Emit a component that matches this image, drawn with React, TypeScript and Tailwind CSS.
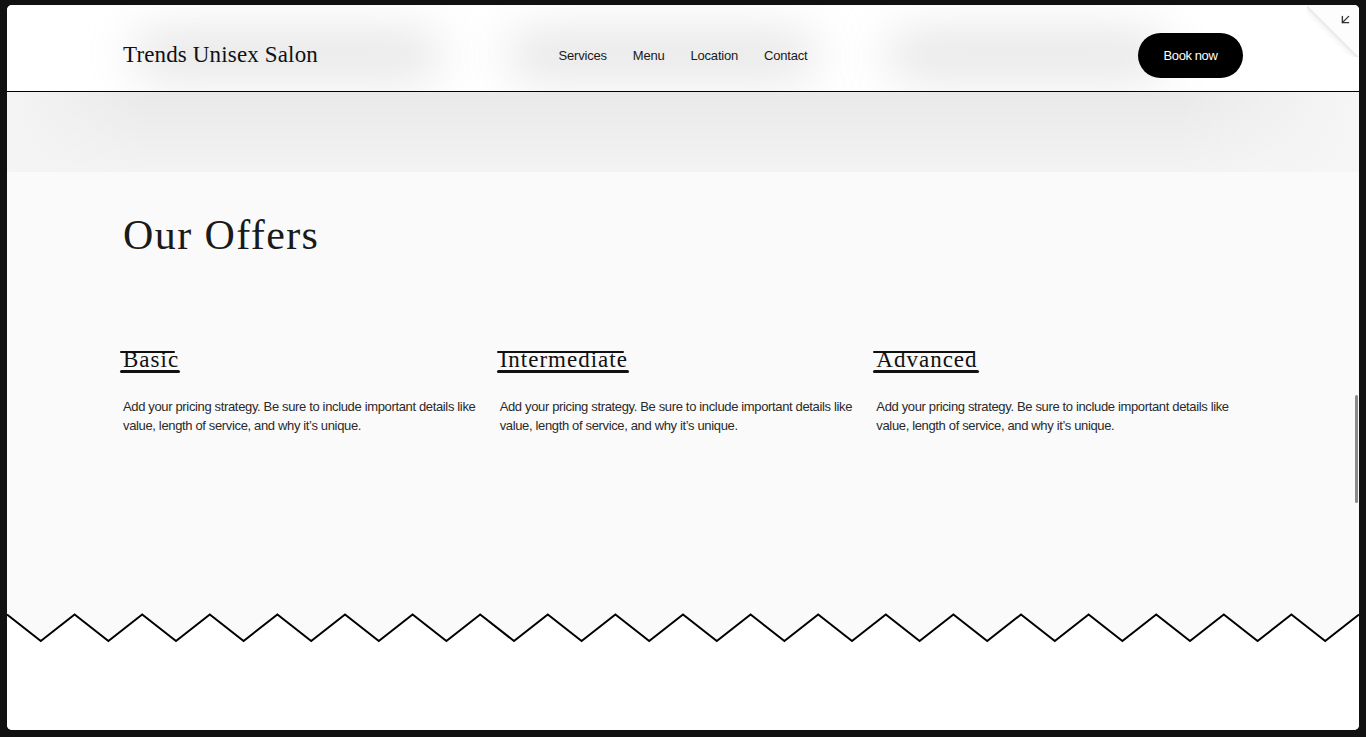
import React from "react";
import { ArrowDownLeft } from "lucide-react";

const serif = "font-['Liberation_Serif',_'Times_New_Roman',_serif]";
const sans = "font-['Liberation_Sans',_Arial,_sans-serif]";

function Zigzag() {
  const pts: string[] = [];
  for (let i = 0; i <= 40; i++) {
    const x = i * 33.8;
    const y = i % 2 === 0 ? 1.5 : 28;
    pts.push(`${x},${y}`);
  }
  const line = pts.join(" ");
  return (
    <svg className="block w-full h-[30px]" viewBox="0 0 1352 30" preserveAspectRatio="none">
      <rect x="0" y="0" width="1352" height="30" fill="#ffffff" />
      <polygon points={`0,0 ${line} 1352,0`} fill="#fafafa" />
      <polyline points={line} fill="none" stroke="#000" strokeWidth="2" />
    </svg>
  );
}

function Offer({ title }: { title: string }) {
  return (
    <div className="flex flex-col">
      <div className="h-[23px]">
        <span className={`relative inline-block ${serif} text-[23px] leading-none tracking-[1px] text-[#111]`}>
          {title}
          <span className="absolute left-[-3px] right-[4px] top-[3px] h-[2px] bg-[#111] rounded-full" />
          <span className="absolute left-[-3px] right-[-1px] top-[22px] h-[2.5px] bg-[#111] rounded-full" />
        </span>
      </div>
      <p className={`mt-[26px] ${sans} text-[13px] leading-[19px] tracking-[-0.35px] text-[#2a2a2a]`}>
        Add your pricing strategy. Be sure to include important details like value, length of service, and why it’s unique.
      </p>
    </div>
  );
}

export default function App() {
  return (
    <div className="w-full h-[737px] bg-[#111111] pt-[5px] pb-[7px] px-[7px]">
      <div className="relative h-[725px] bg-white rounded-[5px] overflow-hidden flex flex-col">
        {/* Header */}
        <header className="relative h-[87px] border-b border-black bg-white shrink-0 overflow-hidden">
          <div className="absolute left-[125px] top-[26px] w-[310px] h-[48px] rounded-full bg-[#d4d4d4] blur-xl opacity-60" />
          <div className="absolute left-[500px] top-[26px] w-[310px] h-[48px] rounded-full bg-[#d4d4d4] blur-xl opacity-60" />
          <div className="absolute left-[880px] top-[26px] w-[280px] h-[48px] rounded-full bg-[#d4d4d4] blur-xl opacity-60" />
          <div className="relative w-[1120px] mx-auto h-full pt-[15px] flex items-center justify-between">
            <div className={`${serif} text-[23px] tracking-[0.15px] text-[#111] w-[320px]`}>Trends Unisex Salon</div>
            <nav className={`${sans} flex items-center gap-[26px] text-[13px] tracking-[-0.2px] text-[#1a1a1a]`}>
              <span>Services</span>
              <span>Menu</span>
              <span>Location</span>
              <span>Contact</span>
            </nav>
            <div className="w-[320px] flex justify-end">
              <button className={`${sans} w-[105px] h-[45px] rounded-full bg-black text-white text-[13px] tracking-[-0.4px]`}>
                Book now
              </button>
            </div>
          </div>
        </header>

        {/* Gradient band */}
        <div className="relative h-[80px] shrink-0 bg-[linear-gradient(to_bottom,#e9e9e9,#f3f3f3)] overflow-hidden">
          <div className="absolute left-0 top-0 w-[140px] h-full bg-[linear-gradient(to_right,#f4f4f4,transparent)]" />
          <div className="absolute right-0 top-0 w-[180px] h-full bg-[linear-gradient(to_left,#f6f6f6,transparent)]" />
        </div>

        {/* Offers */}
        <section className="bg-[#fafafa] h-[441px] shrink-0">
          <div className="w-[1120px] mx-auto pt-[42px]">
            <h2 className={`${serif} text-[42px] leading-none tracking-[1.4px] text-[#1a1a1a]`}>Our Offers</h2>
            <div className="mt-[92px] grid grid-cols-3 gap-[10px]">
              <Offer title="Basic" />
              <Offer title="Intermediate" />
              <Offer title="Advanced" />
            </div>
          </div>
        </section>

        <Zigzag />
        <div className="flex-1 bg-white" />

        {/* Scrollbar thumb */}
        <div className="absolute right-[1px] top-[390px] w-[3px] h-[108px] rounded-full bg-[#8a8a8a]" />

        {/* Page curl */}
        <div className="absolute right-0 top-0 w-[52px] h-[52px]">
          <svg className="absolute inset-0" width="52" height="52" viewBox="0 0 52 52">
            <defs>
              <linearGradient id="shade" x1="1" y1="0" x2="0" y2="1">
                <stop offset="0.5" stopColor="#e4e4e4" />
                <stop offset="0.62" stopColor="#ffffff" stopOpacity="0" />
              </linearGradient>
            </defs>
            <polygon points="0,0 52,52 0,52" fill="url(#shade)" />
            <polygon points="0,0 52,0 52,52" fill="#fdfdfd" />
          </svg>
          <ArrowDownLeft className="absolute right-[6px] top-[7px] text-[#333]" size={15} strokeWidth={2.2} />
        </div>
      </div>
    </div>
  );
}
